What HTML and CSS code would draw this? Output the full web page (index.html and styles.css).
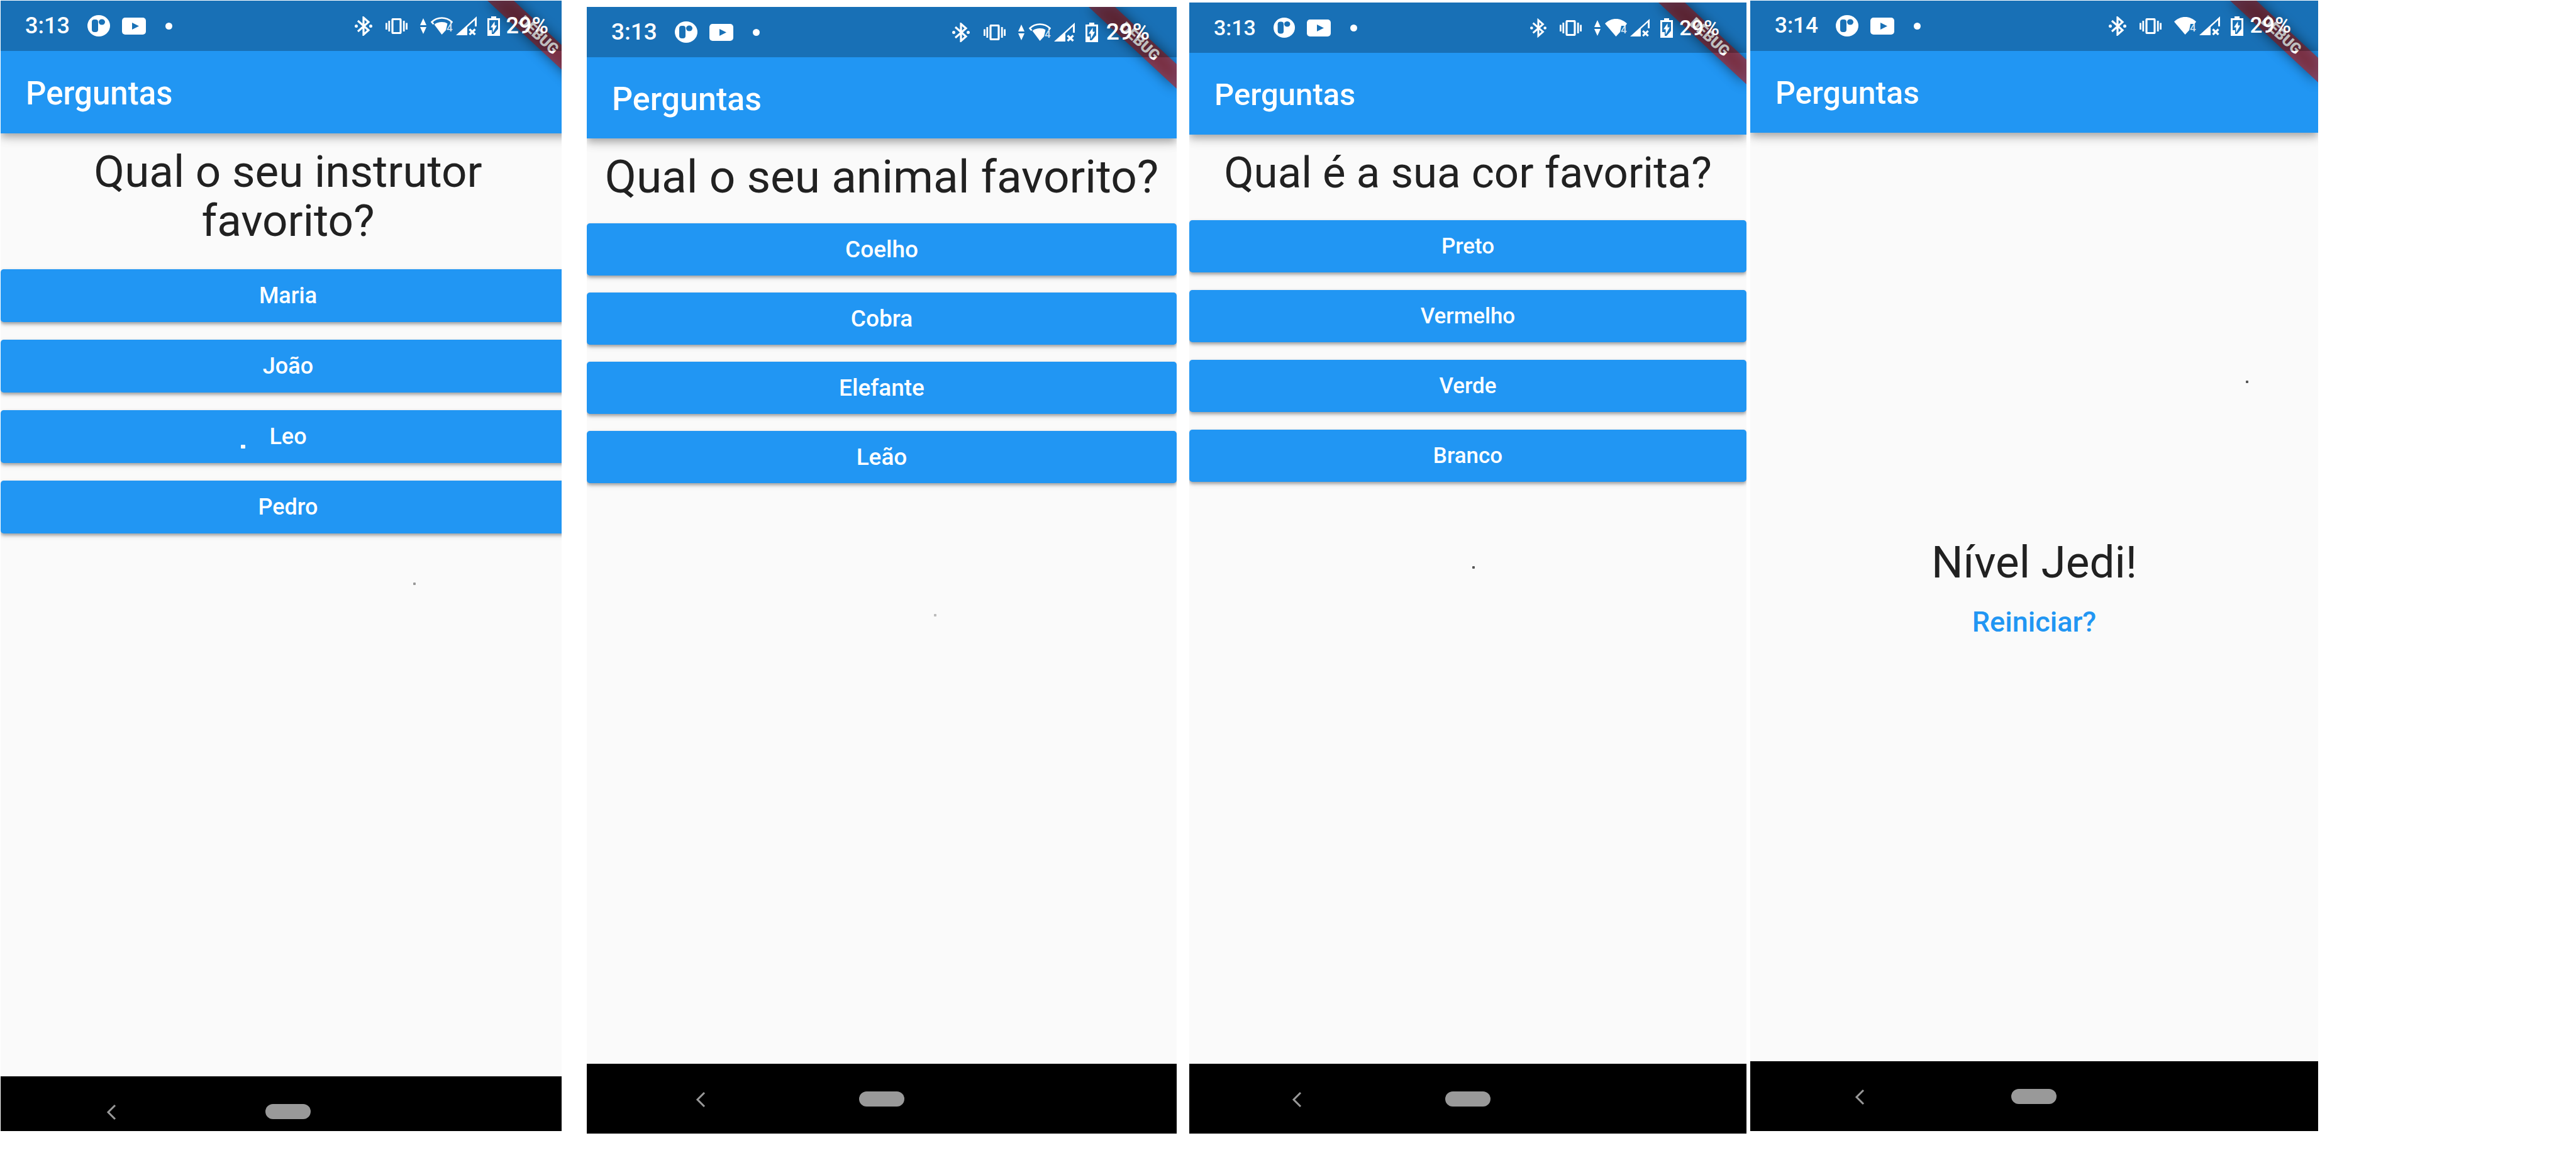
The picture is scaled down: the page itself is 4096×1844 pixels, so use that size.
FILE: index.html
```html
<!DOCTYPE html>
<html lang="pt-BR">
<head>
<meta charset="utf-8">
<title>Perguntas</title>
<link rel="stylesheet" href="styles.css">
</head>
<body>
<svg class="sprite" aria-hidden="true">
  <symbol id="i-app" viewBox="0 0 36 34">
    <ellipse cx="18" cy="17" rx="18" ry="17" fill="#fff"/>
    <rect x="7" y="7" width="10" height="20" rx="4" fill="#1971b6"/>
    <ellipse cx="23" cy="11" rx="5" ry="4.5" fill="#1971b6"/>
  </symbol>
  <symbol id="i-video" viewBox="0 0 38 27">
    <rect width="38" height="27" rx="5" fill="#fff"/>
    <path d="M16 8l11 5.5L16 19z" fill="#1971b6"/>
  </symbol>
  <symbol id="i-bluetooth" viewBox="0 0 28 31">
    <path d="M5 7l17 15-8 7V2l8 7L5 24" fill="none" stroke="#fff" stroke-width="3.2"/>
    <circle cx="2.5" cy="15.5" r="2.5" fill="#fff"/>
    <circle cx="25.5" cy="15.5" r="2.5" fill="#fff"/>
  </symbol>
  <symbol id="i-vibrate" viewBox="0 0 35 25">
    <rect x="11" y="1.5" width="13" height="22" rx="1" fill="none" stroke="#fff" stroke-width="3.2"/>
    <path d="M5.8 4v17M29.2 4v17M1.4 7.500v10.500M33.600 7.500v10.500" stroke="#fff" stroke-width="2.800"/>
  </symbol>
  <symbol id="i-traffic" viewBox="0 0 10 25">
    <path d="M5 0l5 11H0zM5 25L0 14h10z" fill="#fff"/>
  </symbol>
  <symbol id="i-wifi" viewBox="0 0 35 28">
    <path d="M17.500 0C24 0 30 2.500 35 7.500L32.500 11H26l-2 10-6.500 7L0 7.500C5 2.500 11 0 17.500 0z" fill="#fff"/>
  </symbol>
  <symbol id="i-wifi-low" viewBox="0 0 35 28">
    <path d="M4.500 11.500L1.500 8C6 3.500 11 1.500 17.500 1.500S29 3.500 33.500 8l-2 2.500" fill="none" stroke="#fff" stroke-width="2.600"/>
    <path d="M17.500 8c4 0 6.500.8 9 2.500L24 21l-6.500 7L5.500 12C9 9 13 8 17.500 8z" fill="#fff"/>
  </symbol>
  <symbol id="i-signal" viewBox="0 0 33 30">
    <path d="M0 30L33 0v16h-3V6L18 17v13z" fill="#fff"/>
    <path d="M21.500 20.500l9 8.500M30.500 20.500l-9 8.500" stroke="#fff" stroke-width="3.400"/>
  </symbol>
  <symbol id="i-battery" viewBox="0 0 20 31">
    <path d="M6 0h8v3h6v28H0V3h6z" fill="#fff"/>
    <path d="M3 6h14v14l-7 8H7v-6H3z" fill="#1971b6"/>
    <path d="M11.500 8v6.500H15L8.500 26v-8.500H5z" fill="#fff"/>
  </symbol>
  <symbol id="i-back" viewBox="0 0 16 26">
    <path d="M14 2L3 13l11 11" fill="none" stroke="#999" stroke-width="3"/>
  </symbol>
  <symbol id="i-ribbon" viewBox="0 0 200 190">
    <path d="M60 0h42l98 91v39z" fill="#000" opacity=".5" filter="url(#soft)"/>
    <path d="M60 0h42l98 91v39z" fill="#b71c1c" fill-opacity=".627"/>
  </symbol>
  <filter id="soft" x="-30%" y="-30%" width="160%" height="160%"><feGaussianBlur stdDeviation="10"/></filter>
</svg>

<main class="gallery">

  <section class="phone phone--instructor">
    <div class="screen">
      <header class="top">
        <svg class="ribbon" viewBox="0 0 200 190"><use href="#i-ribbon"/><text class="ribbon-text" x="142" y="63" transform="rotate(43 142 54)">DEBUG</text></svg>
        <div class="status">
          <time class="clock">3:13</time>
          <svg class="ic-app"><use href="#i-app"/></svg>
          <svg class="ic-video"><use href="#i-video"/></svg>
          <i class="ic-dot"></i>
          <svg class="ic-bluetooth"><use href="#i-bluetooth"/></svg>
          <svg class="ic-vibrate"><use href="#i-vibrate"/></svg>
          <svg class="ic-traffic"><use href="#i-traffic"/></svg>
          <svg class="ic-wifi" viewBox="0 0 35 28"><use href="#i-wifi-low"/><text class="wifi-text" x="25" y="23">4</text></svg>
          <svg class="ic-signal"><use href="#i-signal"/></svg>
          <svg class="ic-battery"><use href="#i-battery"/></svg>
          <span>29%</span>
        </div>
        <h1 class="appbar">Perguntas</h1>
      </header>
      <div class="content">
        <h2 class="question">Qual o seu instrutor favorito?</h2>
        <div class="answers">
          <button class="answer" type="button">Maria</button>
          <button class="answer" type="button">João</button>
          <button class="answer" type="button">Leo</button>
          <button class="answer" type="button">Pedro</button>
        </div>
        <i class="speck speck--light"></i>
        <i class="speck speck--a"></i>
      </div>
      <nav class="navbar">
        <button class="back" type="button" aria-label="Voltar"><svg class="ic-back"><use href="#i-back"/></svg></button>
        <button class="home" type="button" aria-label="Início"></button>
      </nav>
    </div>
  </section>

  <section class="phone phone--animal">
    <div class="screen">
      <header class="top">
        <svg class="ribbon" viewBox="0 0 200 190"><use href="#i-ribbon"/><text class="ribbon-text" x="142" y="63" transform="rotate(43 142 54)">DEBUG</text></svg>
        <div class="status">
          <time class="clock">3:13</time>
          <svg class="ic-app"><use href="#i-app"/></svg>
          <svg class="ic-video"><use href="#i-video"/></svg>
          <i class="ic-dot"></i>
          <svg class="ic-bluetooth"><use href="#i-bluetooth"/></svg>
          <svg class="ic-vibrate"><use href="#i-vibrate"/></svg>
          <svg class="ic-traffic"><use href="#i-traffic"/></svg>
          <svg class="ic-wifi" viewBox="0 0 35 28"><use href="#i-wifi-low"/><text class="wifi-text" x="25" y="23">4</text></svg>
          <svg class="ic-signal"><use href="#i-signal"/></svg>
          <svg class="ic-battery"><use href="#i-battery"/></svg>
          <span>29%</span>
        </div>
        <h1 class="appbar">Perguntas</h1>
      </header>
      <div class="content">
        <h2 class="question">Qual o seu animal favorito?</h2>
        <div class="answers">
          <button class="answer" type="button">Coelho</button>
          <button class="answer" type="button">Cobra</button>
          <button class="answer" type="button">Elefante</button>
          <button class="answer" type="button">Leão</button>
        </div>
        <i class="speck speck--b"></i>
      </div>
      <nav class="navbar">
        <button class="back" type="button" aria-label="Voltar"><svg class="ic-back"><use href="#i-back"/></svg></button>
        <button class="home" type="button" aria-label="Início"></button>
      </nav>
    </div>
  </section>

  <section class="phone phone--color">
    <div class="screen">
      <header class="top">
        <svg class="ribbon" viewBox="0 0 200 190"><use href="#i-ribbon"/><text class="ribbon-text" x="142" y="63" transform="rotate(43 142 54)">DEBUG</text></svg>
        <div class="status">
          <time class="clock">3:13</time>
          <svg class="ic-app"><use href="#i-app"/></svg>
          <svg class="ic-video"><use href="#i-video"/></svg>
          <i class="ic-dot"></i>
          <svg class="ic-bluetooth"><use href="#i-bluetooth"/></svg>
          <svg class="ic-vibrate"><use href="#i-vibrate"/></svg>
          <svg class="ic-traffic"><use href="#i-traffic"/></svg>
          <svg class="ic-wifi" viewBox="0 0 35 28"><use href="#i-wifi"/><text class="wifi-text" x="25" y="23">4</text></svg>
          <svg class="ic-signal"><use href="#i-signal"/></svg>
          <svg class="ic-battery"><use href="#i-battery"/></svg>
          <span>29%</span>
        </div>
        <h1 class="appbar">Perguntas</h1>
      </header>
      <div class="content">
        <h2 class="question">Qual é a sua cor favorita?</h2>
        <div class="answers">
          <button class="answer" type="button">Preto</button>
          <button class="answer" type="button">Vermelho</button>
          <button class="answer" type="button">Verde</button>
          <button class="answer" type="button">Branco</button>
        </div>
        <i class="speck speck--c"></i>
      </div>
      <nav class="navbar">
        <button class="back" type="button" aria-label="Voltar"><svg class="ic-back"><use href="#i-back"/></svg></button>
        <button class="home" type="button" aria-label="Início"></button>
      </nav>
    </div>
  </section>

  <section class="phone phone--result">
    <div class="screen">
      <header class="top">
        <svg class="ribbon" viewBox="0 0 200 190"><use href="#i-ribbon"/><text class="ribbon-text" x="142" y="63" transform="rotate(43 142 54)">DEBUG</text></svg>
        <div class="status">
          <time class="clock">3:14</time>
          <svg class="ic-app"><use href="#i-app"/></svg>
          <svg class="ic-video"><use href="#i-video"/></svg>
          <i class="ic-dot"></i>
          <svg class="ic-bluetooth"><use href="#i-bluetooth"/></svg>
          <svg class="ic-vibrate"><use href="#i-vibrate"/></svg>
          <svg class="ic-wifi" viewBox="0 0 35 28"><use href="#i-wifi"/><text class="wifi-text" x="25" y="23">4</text></svg>
          <svg class="ic-signal"><use href="#i-signal"/></svg>
          <svg class="ic-battery"><use href="#i-battery"/></svg>
          <span>29%</span>
        </div>
        <h1 class="appbar">Perguntas</h1>
      </header>
      <div class="content content--centered">
        <h2 class="result">Nível Jedi!</h2>
        <button class="restart" type="button">Reiniciar?</button>
        <i class="speck speck--d"></i>
      </div>
      <nav class="navbar">
        <button class="back" type="button" aria-label="Voltar"><svg class="ic-back"><use href="#i-back"/></svg></button>
        <button class="home" type="button" aria-label="Início"></button>
      </nav>
    </div>
  </section>

</main>
</body>
</html>
```
FILE: styles.css
```css
* {
  box-sizing: border-box;
}

body {
  margin: 0;
  background: #fff;
  color: #212121;
  font-family: Roboto, "Noto Sans", sans-serif;
}

h1,
h2 {
  margin: 0;
}

button {
  margin: 0;
  padding: 0;
  border: 0;
  background: none;
  font-family: inherit;
  cursor: pointer;
}

.sprite {
  position: absolute;
  width: 0;
  height: 0;
}

.gallery {
  display: flex;
  min-height: 100vh;
  padding: 1px 410px 42px 1px;
}

.phone {
  --heading: 71px;
  --heading-space: 36px;
  --title: 50px;
  --label: 35px;
  --status: 35px;
  --bar: 130px;
  --button: 83px;
  --gap: 27px;
  --nav: 111px;
  --icon-bluetooth: 28px;
  --icon-signal: 33px;
  --icon-app: 36px;
  --percent-gap: 10px;
  display: flex;
  overflow: hidden;
  background: #fafafa;
}

.phone--instructor {
  --heading-space: 38px;
  --title: 51px;
  --label: 36px;
  --status: 36px;
  --bar: 131px;
  --button: 84px;
  --gap: 28px;
  --nav: 87px;
  flex: 892 1 0;
  margin: 0 40px 4px 0;
}

.phone--animal {
  --heading: 73px;
  --heading-space: 35px;
  --title: 52px;
  --label: 37px;
  --status: 37px;
  --bar: 129px;
  --icon-bluetooth: 30px;
  --percent-gap: 13px;
  flex: 938 1 0;
  margin: 10px 20px 0 0;
}

.phone--color {
  --heading: 69px;
  --title: 49px;
  --status: 34px;
  --gap: 28px;
  --icon-bluetooth: 26px;
  --icon-signal: 31px;
  --icon-app: 34px;
  flex: 886 1 0;
  margin: 3px 6px 0 0;
}

.phone--result {
  flex: 903 1 0;
  margin: 0 0 4px;
}

.screen {
  display: flex;
  flex-direction: column;
  flex: none;
  width: 100%;
}

/* The first screen runs past the right edge of its frame. */
.phone--instructor .screen {
  width: calc(100% + 22px);
}

.top {
  position: relative;
  z-index: 1;
  background: #2196f3;
  box-shadow: 0 5px 10px -2px rgba(0, 0, 0, .2), 0 10px 12px rgba(0, 0, 0, .12), 0 2px 24px rgba(0, 0, 0, .1);
}

.ribbon {
  position: absolute;
  top: 0;
  right: 0;
  width: 200px;
  height: 190px;
}

.ribbon-text {
  fill: #fff;
  font-size: 24px;
  font-weight: 900;
  text-anchor: middle;
}

.wifi-text {
  fill: #d5e5f3;
  font-size: 17px;
  font-weight: 500;
}

.status {
  position: relative;
  display: flex;
  align-items: center;
  height: 80px;
  padding: 0 43px 0 39px;
  background: rgba(0, 0, 0, .25);
  color: #fff;
  font-size: var(--status);
  font-weight: 500;
  line-height: 40px;
}

.clock {
  margin-right: 28px;
}

.ic-app {
  width: var(--icon-app);
  height: 34px;
  margin-right: 19px;
}

.ic-video {
  width: 38px;
  height: 27px;
  margin-right: 31px;
}

.ic-dot {
  width: 11px;
  height: 11px;
  border-radius: 50%;
  background: #fff;
}

.ic-bluetooth {
  width: var(--icon-bluetooth);
  height: 31px;
  margin: 0 21px 0 auto;
}

.ic-vibrate {
  width: 35px;
  height: 25px;
  margin-right: 20px;
}

.ic-traffic {
  width: 10px;
  height: 25px;
  margin-right: 7px;
}

.ic-wifi {
  width: 35px;
  height: 28px;
  margin-right: 5px;
}

.ic-signal {
  width: var(--icon-signal);
  height: 30px;
  margin-right: 17px;
}

.ic-battery {
  width: 20px;
  height: 31px;
  margin-right: var(--percent-gap);
}

.appbar {
  height: var(--bar);
  padding: 2px 0 0 40px;
  color: #fff;
  font-size: var(--title);
  font-weight: 500;
  line-height: var(--bar);
}

.content {
  position: relative;
  flex: 1;
}

.content--centered {
  display: flex;
  flex-direction: column;
  align-items: center;
  justify-content: center;
}

.question,
.result {
  font-size: var(--heading);
  font-weight: 400;
  line-height: 78px;
  text-align: center;
}

.question {
  padding: 22px 24px var(--heading-space);
}

.answers {
  display: flex;
  flex-direction: column;
  gap: var(--gap);
}

.answer {
  height: var(--button);
  border-radius: 5px;
  background: #2196f3;
  box-shadow: 0 3px 5px rgba(0, 0, 0, .3), 0 4px 10px rgba(0, 0, 0, .1);
  color: #fff;
  font-size: var(--label);
  font-weight: 500;
}

.restart {
  height: 111px;
  padding: 0 20px;
  color: #2196f3;
  font-size: 45px;
  font-weight: 500;
}

.navbar {
  display: grid;
  grid-template-columns: 193fr 114fr 193fr;
  justify-items: center;
  height: var(--nav);
  padding-top: 44px;
  background: #000;
}

.ic-back {
  display: block;
  width: 16px;
  height: 26px;
}

.back {
  height: 26px;
}

.home {
  width: 72px;
  height: 24px;
  border-radius: 12px;
  background: #999;
}

/* Stray marks over the screens. */
.speck {
  position: absolute;
  width: 4px;
  height: 4px;
  border-radius: 1px;
  background: #555;
}

.speck--light {
  left: 382px;
  top: 495px;
  width: 7px;
  height: 6px;
  background: #fff;
}

.speck--a {
  left: 656px;
  top: 714px;
  background: #999;
}

.speck--b {
  left: 552px;
  top: 756px;
  background: #bbb;
}

.speck--c {
  left: 450px;
  top: 686px;
}

.speck--d {
  left: 788px;
  top: 394px;
}
```
